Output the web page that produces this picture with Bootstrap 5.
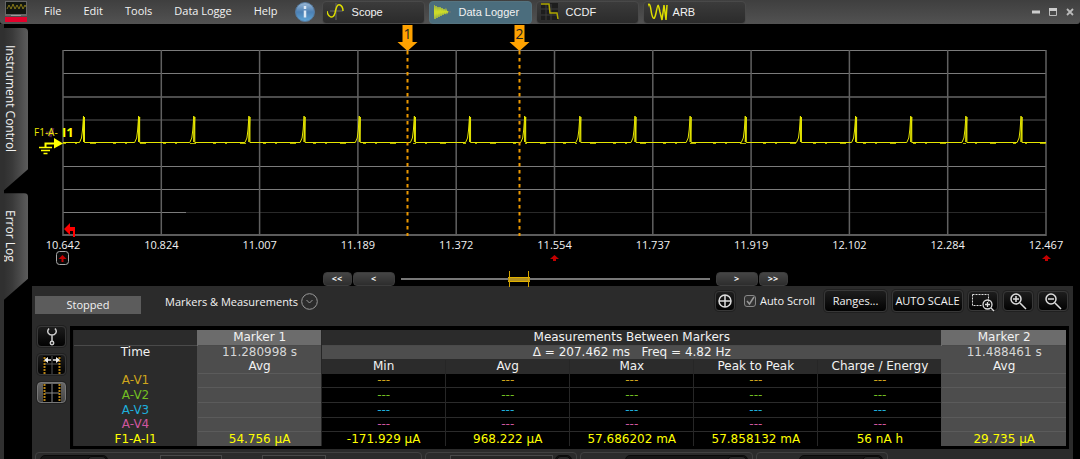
<!DOCTYPE html>
<html lang="en">
<head>
<meta charset="utf-8">
<meta name="viewport" content="width=device-width, initial-scale=1">
<title>Data Logger</title>
<link href="https://cdn.jsdelivr.net/npm/bootstrap@5.3.0/dist/css/bootstrap.min.css" rel="stylesheet">
<style>
  body { background:#000; color:#f2f2f2; font:11px/16px "Open Sans","Noto Sans",sans-serif; }
  button { font:inherit; color:inherit; padding:0; border:0; background:none; }
  svg { display:block; }
  .topbar { height:24px; background:linear-gradient(#3f3f3f,#525252); border-radius:0 0 3px 3px; padding:0 6px 0 5px; }
  .menus { gap:22px; margin:0 17px; }
  .menus a { color:#f2f2f2; text-decoration:none; white-space:nowrap; line-height:14px; }
  .menus { padding-bottom:2px; }
  .modes { gap:4px; margin-left:7px; }
  .mode { width:103px; height:23px; padding-left:4px; gap:3px; border:1px solid #494949; border-radius:4px; background:linear-gradient(#3b3b3b,#2b2b2b); font-family:"Liberation Sans",Arial,sans-serif; white-space:nowrap; }
  .mode.on { background:#4b6d7d; border-color:#55737f; }
  .mode svg { width:22px; height:20px; }
  .wincontrols { gap:9px; }
  .rail { width:32px; border-left:4px solid #303030; padding-right:4px; gap:3px; padding-top:4px; }
  .railtab { width:24px; writing-mode:vertical-rl; background:linear-gradient(90deg,#303030,#3a3a3a 35%,#5c5c5c); border-radius:0 4px 0 0; text-align:left; font-size:12px; font-weight:500; line-height:15px; padding:17px 10px 38px 0; clip-path:polygon(0 0,100% 0,100% calc(100% - 21px),0 100%); }
  .work { min-width:0; padding-right:7px; }
  .plot { margin:0 -7px 0 -4px; }
  .plot text { font-size:11px; fill:#f2f2f2; text-anchor:middle; }
  .scroller { height:15px; gap:1px; margin-top:2px; margin-left:5px; }
  .step { height:14px; border:1px solid #3c3c3c; border-radius:4px; background:linear-gradient(#454545,#2d2d2d); font:bold 9px/10px "Open Sans",sans-serif; }
  .step.far { width:29px; } .step.near { width:42px; }
  .pos { appearance:none; background:none; width:309px; height:16px; margin:0 5px; }
  .pos::-webkit-slider-runnable-track { height:16px; background:linear-gradient(#777,#777) center/100% 2px no-repeat; }
  .pos::-webkit-slider-thumb { appearance:none; width:22px; height:16px; background:linear-gradient(#d4a400,#d4a400) 1px 0/1px 16px no-repeat,linear-gradient(#d4a400,#d4a400) 20px 0/1px 16px no-repeat,linear-gradient(#e0b000 0 1px,#b08f20 1px 4px,#e0b000 4px) 0 6px/22px 5px no-repeat; }
  .panel { background:#2b2b2b; padding:0 5px 0 3px; }
  .tools { height:40px; }
  .status { width:106px; height:18px; line-height:18px; background:#5c5c5c; text-align:center; margin:10px 24px 0 0; }
  .caption2 { margin-top:7px; gap:3px; }
  .dark { border:1px solid #383838; border-radius:4px; background:linear-gradient(#1d1d1d,#020202); box-shadow:0 0 0 1px #202020; display:grid; place-items:center; }
  .cmd { height:22px; } .ico { width:30px; height:20px; }
  .tick { appearance:none; width:12px; height:12px; margin:0; border:1px solid #888; border-radius:3px; background:#333; }
  .side { gap:7px; width:31px; margin:0 2px; }
  .side .dark { width:29px; height:21px; }
  .side .dark.on { background:linear-gradient(#666,#444); border-color:#777; }
  .gridbox { background:#000; padding:4px 3px 3px 3px; margin-right:-1px; }
  .meas { width:100%; table-layout:fixed; border-collapse:collapse; font:12px/14px "DejaVu Sans",Verdana,sans-serif; text-align:center; color:#f2f2f2; }
  .meas th, .meas td { font-weight:400; padding:0; border:1px solid #262626; border-width:0 0 0 1px; line-height:14px; height:15px; text-align:center; white-space:nowrap; }
  .meas .short > * { line-height:13px; height:14px; }
  .meas thead th, .meas tbody th { background:#2b2b2b; }
  .meas thead tr + tr th { border-top:1px solid #4a4a4a; }
  .meas thead tr:nth-child(3) th { border-top-color:#2b2b2b; }
  .meas tbody tr > * { border-top:1px solid #2b2b2b; }
  .meas tbody .mk { border-top-color:#5b5b5b; }
  .meas .mk, .meas thead .mk { background:#4d4d4d; border-left-color:#4d4d4d; }
  .meas thead tr:first-child .mk { background:#6c6c6c; border-left-color:#6c6c6c; }
  .meas thead tr:nth-child(3) .mk { border-top-color:#4d4d4d; }
  .meas thead .val { background:#4d4d4d; color:#d6d6d6; }
  .meas thead .mid { color:#f2f2f2; }
  .v1{color:#cfa51c} .v2{color:#73bf22} .v3{color:#1eaedb} .v4{color:#cf569f} .i1{color:#ffff00}
  .meas td, .meas tbody th { color:inherit; }
  .meas tbody .v1{color:#cfa51c} .meas tbody .v2{color:#73bf22} .meas tbody .v3{color:#1eaedb} .meas tbody .v4{color:#cf569f} .meas tbody .i1{color:#ffff00}
  .strip { gap:3px; margin-top:3px; height:24px; }
  .unit { border:1px solid #414141; border-radius:4px; padding:2px 4px; }
  .combo { background:#161616; border:1px solid #0a0a0a; border-radius:5px; height:18px; display:flex; justify-content:flex-end; }
  .combo::after { content:""; width:20px; height:16px; border-radius:5px; background:#292929; border:1px solid #0a0a0a; }
  .field { appearance:none; background:#262626; border:1px solid #494949; height:18px; padding:0; }
</style>
</head>
<body>
<div class="d-flex flex-column vh-100 overflow-hidden">
<header class="topbar d-flex align-items-center flex-shrink-0">
  <svg width="22" height="24" viewBox="0 0 22 24"><path d="M0 1h22v15H0z" fill="#666"/><path d="M1 2h20v12H1z" fill="#111611"/><path d="M2 9l2-4 2 4 2-5 2 5 2-4 2 4 2-5 2 5 2-4 1 2" fill="none" stroke="#857718"/><path d="M6 15.500h10" stroke="#999"/><path d="M0 17h22v5H0z" fill="#e4002b"/></svg>
  <nav class="menus d-flex">
    <a href="#">File</a><a href="#">Edit</a><a href="#">Tools</a><a href="#">Data Logge</a><a href="#">Help</a>
  </nav>
  <button aria-label="Information"><svg width="20" height="20" viewBox="0 0 20 20"><defs><linearGradient id="g" x2="0" y2="1"><stop stop-color="#9cb9d6"/><stop offset=".5" stop-color="#4c80b4"/><stop offset="1" stop-color="#5fa6d8"/></linearGradient></defs><circle cx="10" cy="10" r="9.500" fill="url(#g)" stroke="#55799d"/><path d="M10 4v3M10 8.500v7" stroke="#dce8f4" stroke-width="2.500"/></svg></button>
  <nav class="modes d-flex me-auto">
    <button class="mode d-flex align-items-center"><svg viewBox="0 0 22 20"><path d="M9 1v17M3 9h13" stroke="#666"/><path d="M0 9c1 6 6 9 8 2 1-5 2-9 5-8 2 1 3 4 3 6" fill="none" stroke="#dddd00" stroke-width="1.500"/></svg>Scope</button>
    <button class="mode on d-flex align-items-center"><svg viewBox="0 0 22 20"><path d="M12 10h5" stroke="#777"/><path d="M-1 3v14M0 3l1 14 1-13 1 12 1-11 1 10 1-10 1 9 1-8 1 7 1-6 1 5 1-4 1 3 1-2" fill="none" stroke="#cddc28" stroke-width="1.200"/></svg>Data Logger</button>
    <button class="mode d-flex align-items-center"><svg viewBox="0 0 22 20"><path d="M0 1h17v17H0z" fill="#1d1d1d"/><path d="M5 2v16M10 2v16M0 7h17M0 13h17" stroke="#3c3c3c"/><path d="M0 2h8l1 9h7l1 6" fill="none" stroke="#b0a800" stroke-width="1.500"/></svg>CCDF</button>
    <button class="mode d-flex align-items-center"><svg viewBox="0 0 22 20"><path d="M-1 7c1-7 3-6 4 1s3 13 5 3 2-10 4-1l2 8 2-15 2 15 1-15" fill="none" stroke="#dddd00" stroke-width="1.500"/></svg>ARB</button>
  </nav>
  <div class="wincontrols d-flex">
    <button aria-label="Minimize"><svg width="8" height="8"><path d="M0 4h8" stroke="#ccc" stroke-width="3"/></svg></button>
    <button aria-label="Maximize"><svg width="8" height="8"><path d="M.5 1v6.500h7V1z" fill="none" stroke="#bbb"/><path d="M0 1.500h8" stroke="#ccc" stroke-width="3"/></svg></button>
    <button aria-label="Close"><svg width="8" height="8"><path d="M1 1l6 6M7 1L1 7" stroke="#bbb" stroke-width="1.800"/></svg></button>
  </div>
</header>
<div class="d-flex flex-grow-1">
  <aside class="rail d-flex flex-column flex-shrink-0">
    <button class="railtab">Instrument Control</button>
    <button class="railtab">Error Log</button>
  </aside>
  <main class="work flex-grow-1">
    <svg class="plot" viewBox="28 24 1052 245" id="plot" role="img" aria-label="Current over time">
      <g fill="none" stroke="#7b7b7b">
        <path d="M63 50.500h983M63 73.500h983M63 166.500h983M63 189.500h983M63 212.500h123"/>
        <path d="M63 97h983" stroke="#4c4c4c" stroke-width="2"/>
        <path d="M63 120h983" stroke="#2c2c2c" stroke-width="2"/>
        <path d="M186 212.500h860" stroke="#292929"/>
        <path d="M63 235h983" stroke="#5c5c5c" stroke-width="2"/>
        <path id="verticals" stroke="#606060" stroke-width="1.500"/>
      </g>
      <g id="ticks"></g>
      <path id="trace" fill="none" stroke="#e6e600"/>
      <path d="M63 143.500h983" stroke="#b0b000" stroke-dasharray="3 9 2 13 6 17"/>
      <path d="M407.500 51v185M519.500 51v185" stroke="#ec9700" stroke-width="2" stroke-dasharray="3.500 3.500"/>
      <path d="M402.500 25h10v17h5l-10 9-10-9h5zM514.500 25h10v17h5l-10 9-10-9h5z" fill="#ffa200"/>
      <text x="407.500" y="39" style="fill:#222;font-size:14px">1</text><text x="519.500" y="39" style="fill:#222;font-size:14px">2</text>
      <path d="M46 133h8M50 137l3-9" stroke="#4c2140" stroke-width="3"/>
      <text x="34" y="136" style="fill:#eee800;font-size:10px;text-anchor:start">F1-A-</text>
      <text x="62" y="137" style="fill:#ffff00;font-size:13px;font-weight:700;text-anchor:start">I1</text>
      <path d="M45.500 148v-4.500h11" fill="none" stroke="#ffff00" stroke-width="2"/><path d="M54 138l9 5.500-9 5z" fill="#ffff00"/>
      <path d="M39 147.500h13M41 150.500h9M43.500 153.500h4" stroke="#ffff00" stroke-width="1.500"/>
      <path d="M64 229l6-6v4h5v10h-2v-6h-3v4z" fill="#f00"/>
      <rect x="56.500" y="251.500" width="12" height="13" rx="3" fill="#080808" stroke="#aaa"/>
      <path d="M58.500 259l4-4 4 4h-3v3h-2v-3zM550 259l4.500-4 4.500 4h-3v2h-3v-2zM1042 259l4.500-4 4.500 4h-3v2h-3v-2z" fill="#c40000"/>
    </svg>
    <div class="scroller d-flex align-items-center justify-content-center">
      <button class="step far">&lt;&lt;</button><button class="step near">&lt;</button>
      <input class="pos" type="range" min="0" max="1000" value="376" aria-label="Time position">
      <button class="step near">&gt;</button><button class="step far">&gt;&gt;</button>
    </div>
    <section class="panel">
      <div class="tools d-flex align-items-start">
        <div class="status">Stopped</div>
        <button class="caption2 d-flex align-items-center me-auto">Markers &amp; Measurements
          <svg width="17" height="17" fill="none" stroke="#999"><circle cx="8.500" cy="8.500" r="7.800"/><path d="M5.500 7l3 3 3-3"/></svg></button>
        <div class="d-flex align-items-center pt-1" style="gap:5px">
          <button class="dark ico" style="width:20px" aria-label="Pan"><svg width="16" height="16" fill="none" stroke="#ddd" stroke-width="1.500"><circle cx="8" cy="8" r="6"/><path d="M8 2v12M2 8h12"/></svg></button>
          <label class="d-flex align-items-center ms-1 me-1 gap-1"><span class="position-relative"><input class="tick d-block" type="checkbox" checked><svg class="position-absolute top-0 start-0 pe-none" width="12" height="12"><path d="M3 6l2.500 3L10 2" fill="none" stroke="#999" stroke-width="1.500"/></svg></span>Auto Scroll</label>
          <button class="dark cmd" style="width:63px">Ranges...</button>
          <button class="dark cmd" style="width:71px">AUTO SCALE</button>
          <button class="dark ico" aria-label="Zoom to box"><svg width="24" height="20" fill="none" stroke="#ddd"><path d="M1.500 2.500h16v7M1.500 2.500v11h9" stroke-dasharray="2 1"/><circle cx="16.500" cy="12.500" r="4.500" stroke-width="1.300"/><path d="M14 12.500h5M16.500 10v5M20 16l3 3" stroke-width="1.300"/></svg></button>
          <button class="dark ico" aria-label="Zoom in"><svg width="18" height="18" fill="none" stroke="#ddd" stroke-width="1.500"><circle cx="7" cy="7" r="5"/><path d="M4 7h6M7 4v6M11 11l6 6"/></svg></button>
          <button class="dark ico" aria-label="Zoom out"><svg width="18" height="18" fill="none" stroke="#ddd" stroke-width="1.500"><circle cx="7" cy="7" r="5"/><path d="M4 7h6M11 11l6 6"/></svg></button>
        </div>
      </div>
      <div class="d-flex">
        <div class="side d-flex flex-column flex-shrink-0">
          <button class="dark" aria-label="Settings"><svg width="12" height="19" fill="none" stroke="#ccc" stroke-width="1.500"><path d="M3 1.500C0 5 3 8 6 8s6-3 3-6.500M6 8v7"/><circle cx="6" cy="16" r="1.700"/></svg></button>
          <button class="dark" aria-label="Marker spacing"><svg width="18" height="18" fill="none"><path d="M0 0h18v18H0z" fill="#000"/><path d="M9 0v18M2 8h14" stroke="#555"/><path d="M1.500 1v17M16.500 1v17" stroke="#b88414" stroke-width="2" stroke-dasharray="2 1"/><path d="M4 4h4M10 4h4" stroke="#eee" stroke-width="1.500"/><path d="M1 4l4-3v6zM17 4l-4-3v6z" fill="#eee"/></svg></button>
          <button class="dark on" aria-label="Markers"><svg width="18" height="18" fill="none"><path d="M0 0h18v18H0z" fill="#000"/><path d="M9 0v18M2 9h14" stroke="#888"/><path d="M1.500 0v18M16.500 0v18" stroke="#b88414" stroke-width="2" stroke-dasharray="2 1"/></svg></button>
        </div>
        <div class="gridbox flex-grow-1">
          <table class="meas">
            <thead>
              <tr><th></th><th class="mk">Marker 1</th><th colspan="5">Measurements Between Markers</th><th class="mk">Marker 2</th></tr>
              <tr class="short"><th>Time</th><th class="mk val">11.280998 s</th><th class="val mid" colspan="5">Δ = 207.462 ms&nbsp;&nbsp; Freq = 4.82 Hz</th><th class="mk val">11.488461 s</th></tr>
              <tr class="short"><th></th><th class="mk">Avg</th><th>Min</th><th>Avg</th><th>Max</th><th>Peak to Peak</th><th>Charge / Energy</th><th class="mk">Avg</th></tr>
            </thead>
            <tbody>
              <tr class="v1 short"><th>A-V1</th><td class="mk"></td><td>---</td><td>---</td><td>---</td><td>---</td><td>---</td><td class="mk"></td></tr>
              <tr class="v2"><th>A-V2</th><td class="mk"></td><td>---</td><td>---</td><td>---</td><td>---</td><td>---</td><td class="mk"></td></tr>
              <tr class="v3"><th>A-V3</th><td class="mk"></td><td>---</td><td>---</td><td>---</td><td>---</td><td>---</td><td class="mk"></td></tr>
              <tr class="v4 short"><th>A-V4</th><td class="mk"></td><td>---</td><td>---</td><td>---</td><td>---</td><td>---</td><td class="mk"></td></tr>
              <tr class="i1"><th>F1-A-I1</th><td class="mk">54.756 µA</td><td>-171.929 µA</td><td>968.222 µA</td><td>57.686202 mA</td><td>57.858132 mA</td><td>56 nA h</td><td class="mk">29.735 µA</td></tr>
            </tbody>
          </table>
        </div>
      </div>
      <div class="strip d-flex">
        <div class="unit d-flex" style="width:387px"><button class="combo" style="width:68px" aria-label="Source"></button><input class="field" style="width:62px;margin-left:52px" aria-label="Scale"><input class="field" style="width:64px;margin-left:40px" aria-label="Offset"></div>
        <div class="unit d-flex justify-content-end" style="width:152px"><input class="field" style="width:103px" aria-label="Span"><button class="combo" style="width:17px;margin-left:2px" aria-label="Span list"></button></div>
        <div class="unit d-flex justify-content-end" style="width:173px"><button class="combo" style="width:123px" aria-label="Trigger"></button></div>
        <div class="unit d-flex justify-content-end" style="width:132px"><button class="combo" style="width:84px" aria-label="Mode"></button></div>
      </div>
    </section>
  </main>
</div>
</div>
<script src="https://cdn.jsdelivr.net/npm/bootstrap@5.3.0/dist/js/bootstrap.bundle.min.js"></script>
<script>
  const labels = ["10.642","10.824","11.007","11.189","11.372","11.554","11.737","11.919","12.102","12.284","12.467"];
  const step = 983 / 10;
  document.getElementById("verticals").setAttribute("d", labels.map((t, i) => `M${63 + i * step} 50v186`).join(""));
  document.getElementById("ticks").innerHTML = labels.map((t, i) => `<text x="${63 + i * step}" y="249">${t}</text>`).join("");
  let d = "M63 142.5";
  for (let i = 0; i < 18; i++) {
    const x = 83.5 + i * 55.15;
    d += `H${x - 4}L${x - 2} 138L${x - 1} 130L${x} 116V142L${x + 1} 117V142.5`;
  }
  document.getElementById("trace").setAttribute("d", d + "H1046");
</script>
</body>
</html>
